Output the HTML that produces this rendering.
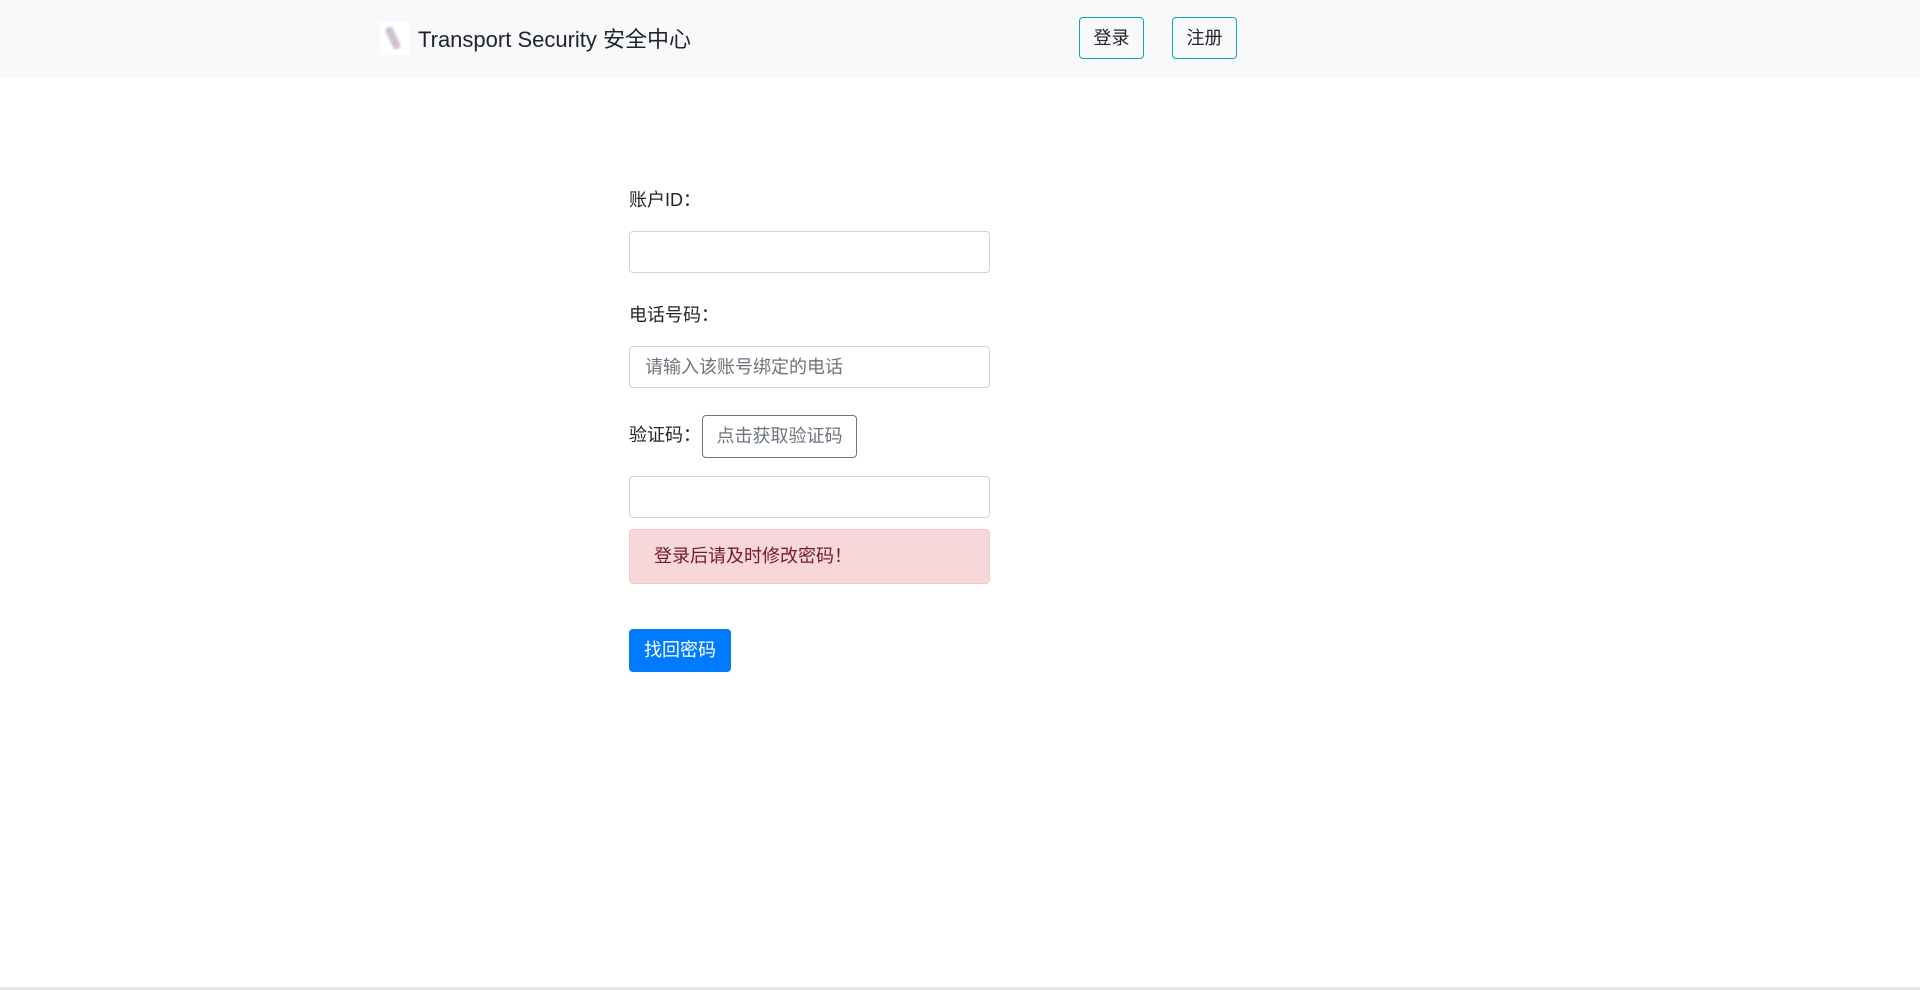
<!DOCTYPE html>
<html><head><meta charset="utf-8"><style>
*{box-sizing:border-box;margin:0;padding:0}
body{width:1920px;height:990px;background:#fff;font-family:"Liberation Sans","Noto Sans CJK SC",sans-serif;color:#212529;position:relative;overflow:hidden}
.nav{position:absolute;left:0;top:0;width:1920px;height:78px;background:#f8f9fa}
.logo{position:absolute;left:380px;top:22px;width:29px;height:33px;background:#fff}
.logo:after{content:"";position:absolute;left:9px;top:4px;width:8px;height:24px;background:linear-gradient(#c9c3d8,#d8c0cc);transform:rotate(-25deg);border-radius:4px;filter:blur(1px)}
.brand{position:absolute;left:418px;top:26px;font-size:22px;line-height:28px}
.nb{position:absolute;top:17px;height:42px;width:65px;border:1px solid #17a2b8;border-radius:4px;font-size:18px;line-height:40px;text-align:center}
.lbl{position:absolute;left:629px;font-size:18px;line-height:24px}
.inp{position:absolute;left:629px;width:361px;height:42px;border:1px solid #ced4da;border-radius:4px;font-size:18px;line-height:40px;padding-left:15px;color:#6c757d}
.vb{position:absolute;left:702px;top:415px;width:155px;height:43px;border:1px solid #6c757d;border-radius:4px;color:#6c757d;font-size:18px;line-height:41px;text-align:center}
.alert{position:absolute;left:629px;top:529px;width:361px;height:55px;background:#f8d7da;border:1px solid #f5c6cb;border-radius:4px;color:#721c24;font-size:18px;line-height:53px;padding-left:24px}
.sb{position:absolute;left:629px;top:629px;width:102px;height:43px;background:#007bff;border-radius:4px;color:#fff;font-size:18px;line-height:43px;text-align:center}
.bl{position:absolute;left:0;top:987px;width:1920px;height:3px;background:#e5e5e5}
</style></head><body>
<div class="nav">
<div class="logo"></div>
<div class="brand">Transport Security 安全中心</div>
<div class="nb" style="left:1079px">登录</div>
<div class="nb" style="left:1172px">注册</div>
</div>
<div class="lbl" style="top:188px">账户ID：</div>
<div class="inp" style="top:231px"></div>
<div class="lbl" style="top:303px">电话号码：</div>
<div class="inp" style="top:346px">请输入该账号绑定的电话</div>
<div class="lbl" style="top:423px">验证码：</div>
<div class="vb">点击获取验证码</div>
<div class="inp" style="top:476px"></div>
<div class="alert">登录后请及时修改密码！</div>
<div class="sb">找回密码</div>
<div class="bl"></div>
</body></html>
